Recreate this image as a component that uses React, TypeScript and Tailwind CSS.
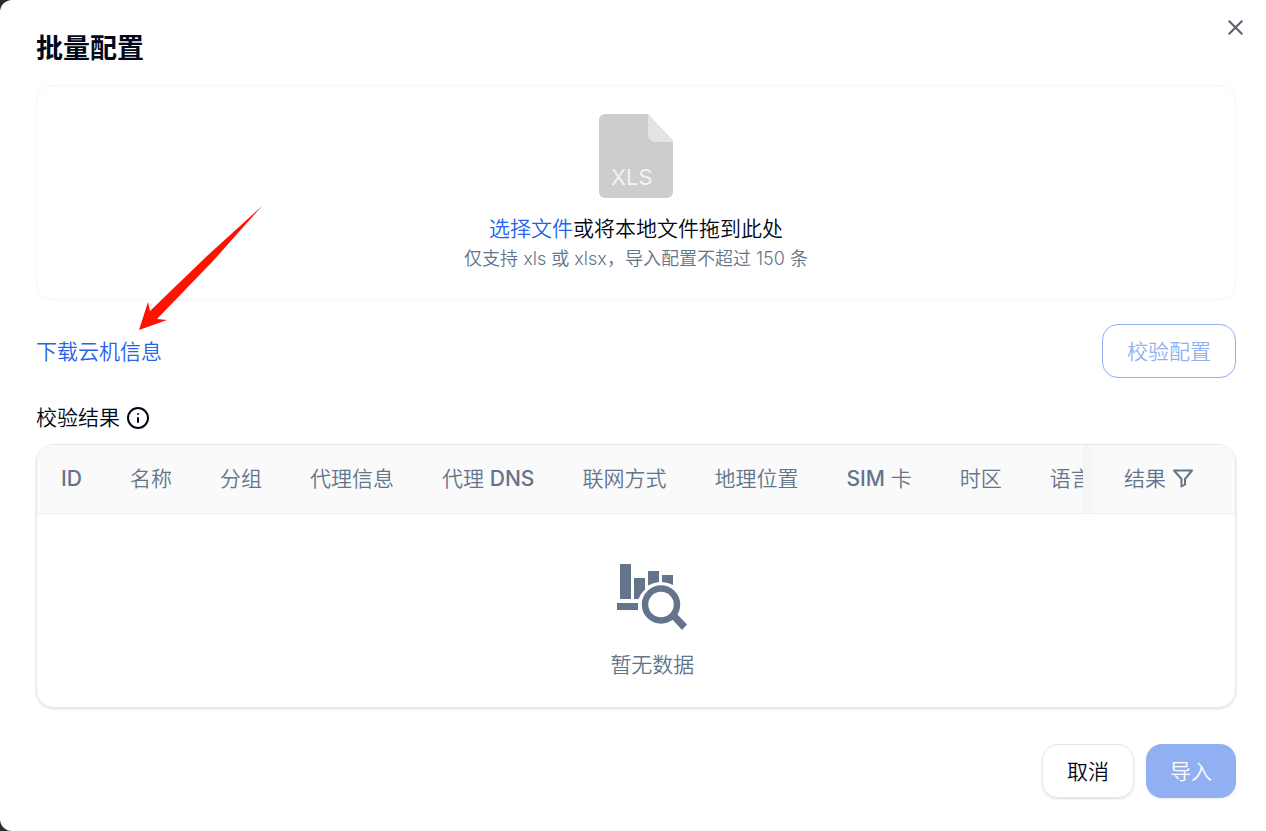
import { useRef, useState } from "react";
import { Info, X } from "lucide-react";

const columns = [
  { latin: "ID", label: "" },
  { latin: "", label: "名称" },
  { latin: "", label: "分组" },
  { latin: "", label: "代理信息" },
  { latin: "DNS", label: "代理 " },
  { latin: "", label: "联网方式" },
  { latin: "", label: "地理位置" },
  { latin: "SIM", label: " 卡", latinFirst: true },
  { latin: "", label: "时区" },
  { latin: "", label: "语言" },
];

const XlsIcon = () => (
  <svg width="74" height="84" viewBox="0 0 74 84" aria-hidden="true">
    <path d="M6 0H49L74 27V78a6 6 0 0 1-6 6H6a6 6 0 0 1-6-6V6a6 6 0 0 1 6-6Z" fill="#cdcdcd" />
    <path d="M49 0L74 28H56a7 7 0 0 1-7-7Z" fill="#e4e4e4" />
    <text x="12" y="71" fontSize="22" fontWeight="400" fill="#f3f3f3" fontFamily="Inter, sans-serif">
      XLS
    </text>
  </svg>
);

const FilterIcon = () => (
  <svg width="20" height="19" viewBox="0 0 20 19" fill="none" stroke="currentColor" strokeWidth="2" strokeLinejoin="round" aria-hidden="true">
    <path d="M1 1.500H19L12 10V15.500L8.500 17.500V10Z" />
  </svg>
);

const EmptyIcon = () => (
  <svg width="70" height="66" viewBox="0 0 70 66" fill="currentColor" aria-hidden="true">
    <path d="M3 0H14V35H3Z" />
    <path d="M17 14H28V25.500Q23.500 29.500 21.500 35H17Z" />
    <path d="M31 7H42V18Q36 18.500 31 21.500Z" />
    <path d="M45 11H56V21Q51 18.500 45 18Z" />
    <path d="M0 39H21V46H0Z" />
    <circle cx="44" cy="40.500" r="16" fill="none" stroke="currentColor" strokeWidth="6.500" />
    <path d="M53 53L58 48L70 60.500L65 66Z" />
  </svg>
);

const PointerArrow = () => (
  <svg
    className="pointer-events-none absolute left-[139px] top-[206px]"
    width="124"
    height="125"
    viewBox="0 0 124 125"
    aria-hidden="true"
  >
    <path d="M0 124L9 96L11 105L68 50L123 0L74 55L18 113L28 114Z" fill="#ff1200" />
  </svg>
);

const App = () => {
  const [file, setFile] = useState<File | null>(null);
  const inputRef = useRef<HTMLInputElement>(null);

  const handleDrop = (e: any) => {
    e.preventDefault();
    setFile(e.dataTransfer.files[0] || null);
  };

  return (
    <div className="min-h-screen bg-[#2b2c33]">
      <div
        role="dialog"
        aria-labelledby="dialog-title"
        className="relative min-h-screen rounded-l-[12px] bg-white pt-[35px] pr-[30px] pb-8 pl-9 font-['Inter','Noto_Sans_CJK_SC',sans-serif] text-[21px] font-[350] leading-[30px] text-[#020817]"
      >
        <button
          type="button"
          aria-label="关闭"
          className="absolute right-[18px] top-[15px] text-[#5b616e]"
        >
          <X size={25} strokeWidth={2} />
        </button>

        <h2 id="dialog-title" className="text-[27px] font-bold leading-[27px]">
          批量配置
        </h2>

        {/* Upload area */}
        <div
          className="mt-[23px] flex flex-col items-center rounded-2xl border border-[#f4f6f9] pt-7 pb-[25px]"
          onDragOver={(e) => e.preventDefault()}
          onDrop={handleDrop}
        >
          <XlsIcon />
          <div className="mt-4">
            <button
              type="button"
              className="text-[#2563eb]"
              onClick={() => inputRef.current?.click()}
            >
              选择文件
            </button>
            或将本地文件拖到此处
          </div>
          <input
            ref={inputRef}
            type="file"
            accept=".xls,.xlsx"
            aria-label="选择文件"
            className="hidden"
            onChange={(e) => setFile(e.target.files?.[0] || null)}
          />
          <p className="text-[18px] text-[#64748b]">
            仅支持 xls 或 xlsx，导入配置不超过 150 条
          </p>
        </div>

        <div className="mt-6 flex items-center justify-between">
          <a href="#download" className="pt-0.5 text-[#2563eb]">
            下载云机信息
          </a>
          <button
            type="button"
            disabled={!file}
            className="h-[54px] rounded-2xl border border-[#2563eb] px-6 pt-0.5 text-[#2563eb] disabled:opacity-50"
          >
            校验配置
          </button>
        </div>

        <div className="mt-7 flex h-6 items-center gap-1.5">
          校验结果
          <Info size={24} strokeWidth={2} />
        </div>

        {/* Result table */}
        <div className="mt-3.5 overflow-x-auto rounded-[18px] border border-[#e2e8f0] shadow-sm [scrollbar-width:none]">
          <table className="w-max min-w-full text-[#64748b]">
            <thead>
              <tr className="h-[68px] border-b border-[#edf1f6] bg-[#fafafa]">
                {columns.map(({ latin, label, latinFirst }) => (
                  <th key={latin + label} className="whitespace-nowrap px-6 text-left font-[350]">
                    {!latinFirst && label}
                    {latin && <span className="font-medium">{latin}</span>}
                    {latinFirst && label}
                  </th>
                ))}
                <th className="sticky right-0 w-[152px] min-w-[152px] bg-[#fafafa] bg-linear-to-r from-[#f3f3f4] to-[#fafafa] to-[14px] pl-[41px] text-left font-[350]">
                  <button type="button" className="flex items-center gap-[7px]">
                    结果
                    <FilterIcon />
                  </button>
                </th>
              </tr>
            </thead>
            <tbody>
              <tr>
                <td colSpan={columns.length + 1} className="h-[194px] pt-6">
                  <div className="flex flex-col items-center gap-5">
                    <EmptyIcon />
                    暂无数据
                  </div>
                </td>
              </tr>
            </tbody>
          </table>
        </div>

        <div className="mt-9 flex justify-end gap-3">
          <button
            type="button"
            className="h-[54px] rounded-2xl border border-[#e2e8f0] px-6 pt-0.5 shadow-sm"
          >
            取消
          </button>
          <button
            type="button"
            disabled={!file}
            className="h-[54px] rounded-2xl bg-[#2563eb] px-6 pt-0.5 text-[#f8fafc] shadow-sm disabled:opacity-50"
          >
            导入
          </button>
        </div>

        <PointerArrow />
      </div>
    </div>
  );
};

export default App;
